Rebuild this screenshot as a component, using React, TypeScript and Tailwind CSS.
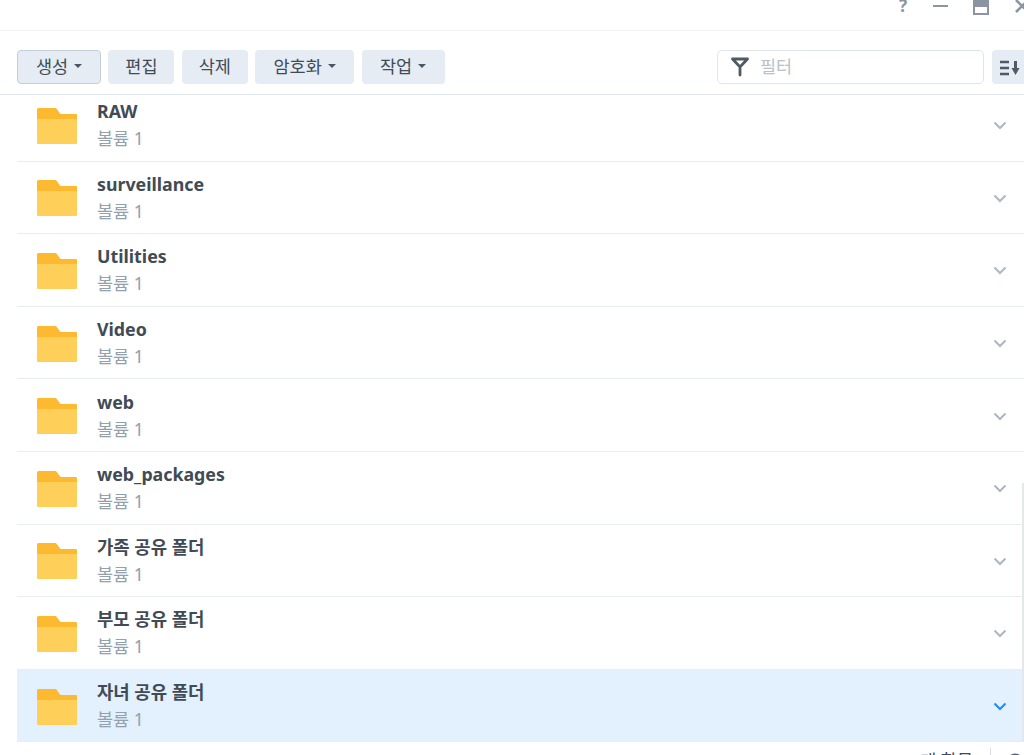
const folders = [
  { name: "RAW" },
  { name: "surveillance" },
  { name: "Utilities" },
  { name: "Video" },
  { name: "web" },
  { name: "web_packages" },
  { name: "가족 공유 폴더" },
  { name: "부모 공유 폴더" },
  { name: "자녀 공유 폴더", selected: true },
];

function FolderIcon() {
  return (
    <svg width="40" height="36" viewBox="0 0 40 36" className="mt-[2px] shrink-0">
      <path d="M0 1.5A1.5 1.5 0 0 1 1.5 0H19l4.5 6H39a1 1 0 0 1 1 1v5H0z" fill="#fdb92f" />
      <path d="M0 11h40v24a1 1 0 0 1-1 1H1a1 1 0 0 1-1-1z" fill="#ffd059" />
    </svg>
  );
}

function Caret() {
  return <span className="ml-1.5 inline-block h-0 w-0 border-x-[4px] border-t-[4px] border-x-transparent border-t-[#4a5568]" />;
}

function ToolButton({ label, w, caret, active }: { label: string; w: string; caret?: boolean; active?: boolean }) {
  return (
    <button
      className={`flex h-[34px] items-center justify-center rounded-[4px] bg-[#e6ecf3] pb-[2px] text-[17.5px] text-[#414b55] ${w} ${
        active ? "border border-[#c5ced8]" : ""
      }`}
    >
      {label}
      {caret && <Caret />}
    </button>
  );
}

function Row({ name, selected }: { name: string; selected?: boolean }) {
  return (
    <div
      className={`flex h-[72.6px] items-center border-b border-[#e9edf2] pl-5 pr-4 ${
        selected ? "bg-[#e3f0fd]" : "bg-white"
      }`}
    >
      <FolderIcon />
      <div className="ml-5 flex-1 pb-[1px]">
        <div className="text-[17.8px] leading-[24px] font-bold text-[#414b55]">{name}</div>
        <div className="mt-[4px] text-[17.5px] leading-[22px] text-[#94a0ab]">볼륨 1</div>
      </div>
      <svg width="14" height="9" viewBox="0 0 14 9" fill="none" className="mr-[1px] mt-[2px]">
        <path d="M1.5 1.5L7 7l5.5-5.5" stroke={selected ? "#1a8cff" : "#aeb6bf"} strokeWidth="2" />
      </svg>
    </div>
  );
}

export default function App() {
  return (
    <div className="relative h-[755px] w-[1024px] overflow-hidden bg-white font-['Noto_Sans','Noto_Sans_CJK_KR',sans-serif]">
      {/* window controls, cut off by the top edge */}
      <div className="flex h-[31px] items-start justify-end border-b border-[#eef1f5]">
        <div className="-mt-[6px] flex items-center text-[#8b95a1]">
          <span className="mr-[26px] text-[17px] leading-[24px] font-bold">?</span>
          <span className="mr-[25px] h-[2.5px] w-[15px] bg-[#8b95a1]" />
          <svg width="16" height="18" viewBox="0 0 16 18" className="mr-[25px]">
            <path d="M1 1h14v16H1z" fill="none" stroke="#8b95a1" strokeWidth="2" />
            <path d="M1 1h14v9H1z" fill="#8b95a1" />
          </svg>
          <svg width="16" height="16" viewBox="0 0 16 16" className="-mr-[6px]">
            <path d="M2 2l12 12M14 2L2 14" stroke="#8b95a1" strokeWidth="2.6" />
          </svg>
        </div>
      </div>

      {/* toolbar */}
      <div className="flex h-[64px] items-start border-b border-[#dfe5ec] pl-[17px] pt-[19px]">
        <div className="flex gap-[7.4px]">
          <ToolButton label="생성" w="w-[84px]" caret active />
          <ToolButton label="편집" w="w-[66px]" />
          <ToolButton label="삭제" w="w-[66px]" />
          <ToolButton label="암호화" w="w-[99px]" caret />
          <ToolButton label="작업" w="w-[83px]" caret />
        </div>
        <div className="ml-auto flex items-start">
          <div className="flex h-[34px] w-[267px] items-center rounded-[5px] border border-[#dfe5ec] pl-[13px]">
            <svg width="18" height="20" viewBox="0 0 18 20" fill="none">
              <path d="M1.5 2h15M2 2.5l7 7.5 7-7.5M9 9.5V18" stroke="#4f5a65" strokeWidth="2.8" strokeLinecap="round" />
            </svg>
            <span className="ml-[11px] pb-[2px] text-[17.5px] text-[#b9c0c8]">필터</span>
          </div>
          <div className="ml-[8px] flex h-[34px] w-[32px] items-center rounded-l-[4px] bg-[#e6ecf3] pl-2">
            <svg width="20" height="16" viewBox="0 0 20 16" className="mt-[2px]">
              <path d="M0 2h9M0 8h9M0 14h9" stroke="#4f5a65" strokeWidth="2.4" />
              <path d="M15.5 1v9" stroke="#4f5a65" strokeWidth="3" />
              <path d="M11.5 8h8l-4 7z" fill="#4f5a65" />
            </svg>
          </div>
        </div>
      </div>

      {/* shared folder list, scrolled a little so the first row is clipped */}
      <div className="h-[647px] overflow-hidden">
        <div className="-mt-[6px] ml-[17px]">
          {folders.map((f) => (
            <Row key={f.name} name={f.name} selected={f.selected} />
          ))}
        </div>
      </div>

      {/* scrollbar track at right edge */}
      <div className="absolute right-0 top-[483px] h-[258px] w-[2px] bg-[#e4e7eb]" />

      {/* status bar, cut off by the bottom edge */}
      <div className="absolute bottom-0 right-0 flex h-[7px] items-start overflow-hidden">
        <span className="mt-[2px] text-[17.5px] leading-[20px] text-[#414b55]">개 항목</span>
        <span className="ml-[17px] h-[7px] w-px bg-[#d8dde3]" />
        <svg width="18" height="18" viewBox="0 0 18 18" fill="none" className="ml-[15px] mt-[5px]">
          <circle cx="9" cy="9" r="7.5" stroke="#5b6670" strokeWidth="2" />
        </svg>
      </div>
    </div>
  );
}
